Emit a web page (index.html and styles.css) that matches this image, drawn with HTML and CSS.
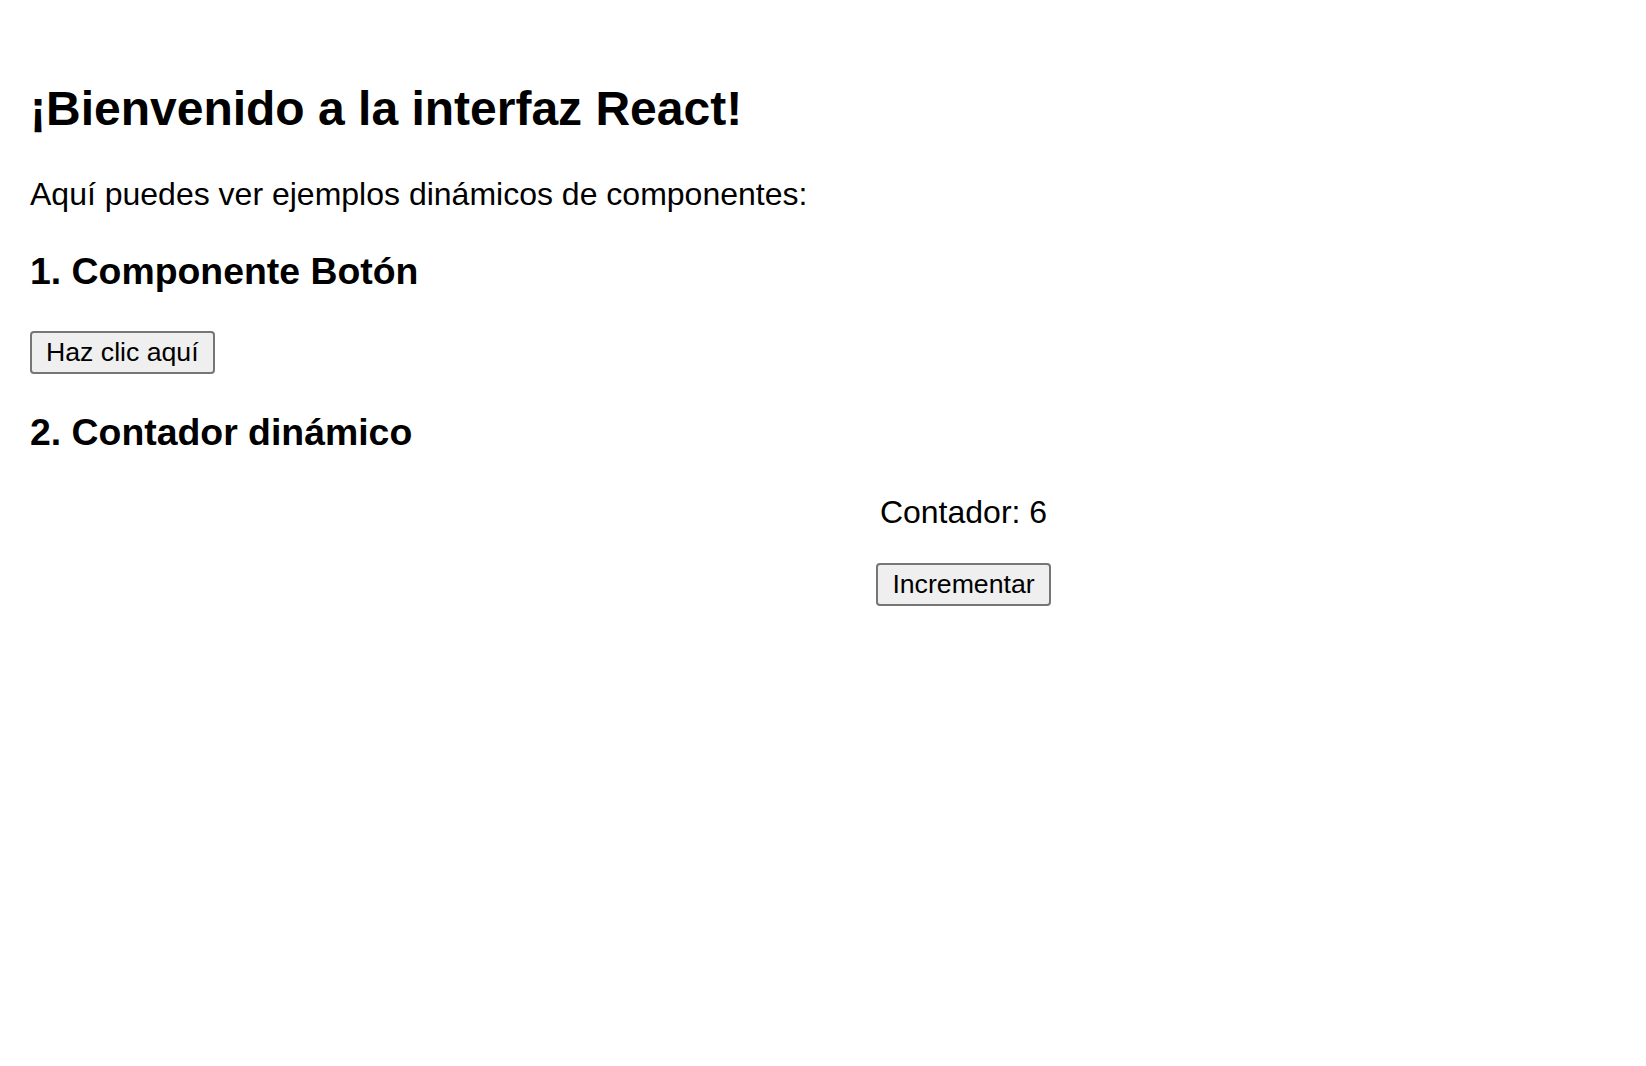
FILE: index.html
```html
<!DOCTYPE html>
<html lang="es">
<head>
<meta charset="utf-8">
<title>Interfaz React</title>
<link rel="stylesheet" href="styles.css">
</head>
<body>
<div class="page">
  <h1 class="title">¡Bienvenido a la interfaz React!</h1>
  <p class="intro">Aquí puedes ver ejemplos dinámicos de componentes:</p>
  <h2 class="section-title">1. Componente Botón</h2>
  <div class="button-row">
    <button class="btn" type="button">Haz clic aquí</button>
  </div>
  <h2 class="section-title">2. Contador dinámico</h2>
  <div class="counter">
    <p class="counter-value">Contador: 6</p>
    <div class="button-row center">
      <button class="btn" type="button">Incrementar</button>
    </div>
  </div>
</div>
</body>
</html>
```

FILE: styles.css
```css
html, body {
  margin: 0;
  padding: 0;
  background: #ffffff;
}

.page {
  padding: 41px 29px 0 30px;
  font-family: "Liberation Sans", Arial, sans-serif;
  font-size: 32px;
  color: #000000;
}

.title {
  font-size: 48px;
  font-weight: bold;
  margin: 40px 0 40px 0;
  line-height: normal;
}

.intro {
  font-size: 32px;
  margin: 32px 0;
  line-height: normal;
}

.section-title {
  font-size: 37.4px;
  font-weight: bold;
  margin: 37.4px 0;
  line-height: normal;
}

.button-row {
  display: flex;
}

.button-row.center {
  justify-content: center;
}

.btn {
  font-family: "Liberation Sans", Arial, sans-serif;
  font-size: 26.67px;
  line-height: normal;
  color: #000000;
  background: #efefef;
  border: 2px solid #767676;
  border-radius: 4px;
  padding: 4px 14px;
  margin: 0;
}

.counter {
  margin-left: 280px;
  text-align: center;
}

.counter-value {
  font-size: 32px;
  margin: 39.4px 0 32px 0;
  line-height: normal;
}
```
